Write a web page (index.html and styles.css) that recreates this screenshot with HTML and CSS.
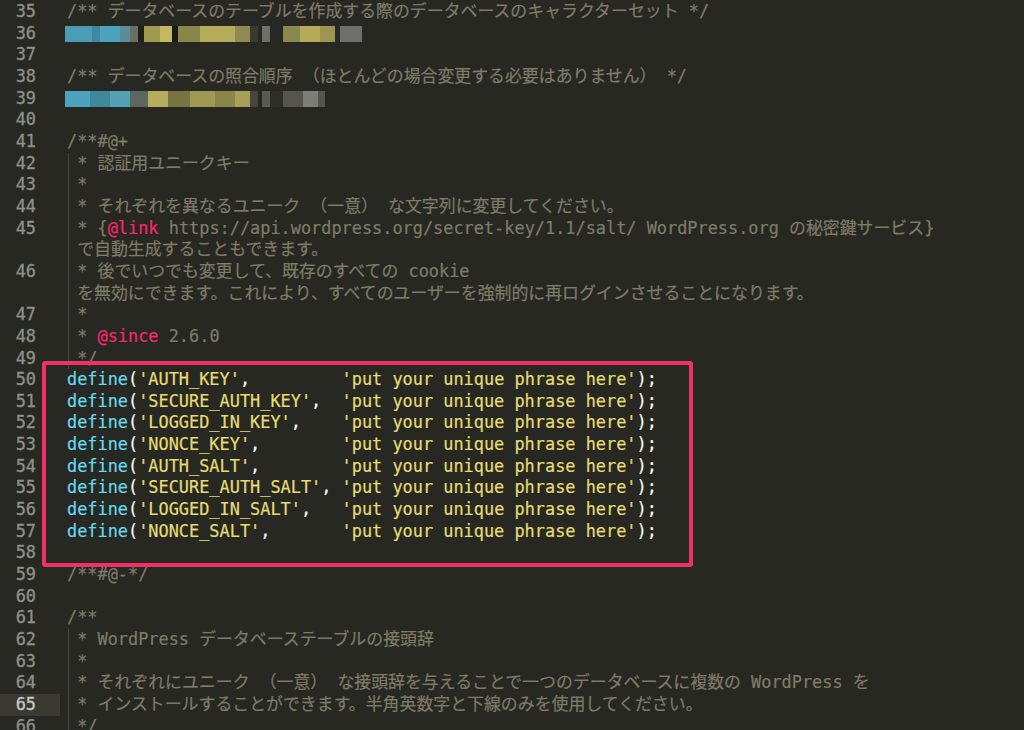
FILE: index.html
```html
<!DOCTYPE html>
<html lang="ja">
<head>
  <meta charset="UTF-8">
  <title>wp-config.php</title>
  <link rel="stylesheet" href="styles.css">
</head>
<body>
  <div class="editor">
    <div class="row"><span class="ln">35</span><span class="code"><span class="c">/** データベースのテーブルを作成する際のデータベースのキャラクターセット */</span></span></div>
    <div class="row"><span class="ln">36</span><span class="code"><span class="blur blur-a"></span></span></div>
    <div class="row"><span class="ln">37</span><span class="code"></span></div>
    <div class="row"><span class="ln">38</span><span class="code"><span class="c">/** データベースの照合順序 （ほとんどの場合変更する必要はありません） */</span></span></div>
    <div class="row"><span class="ln">39</span><span class="code"><span class="blur blur-b"></span></span></div>
    <div class="row"><span class="ln">40</span><span class="code"></span></div>
    <div class="row"><span class="ln">41</span><span class="code"><span class="c">/**#@+</span></span></div>
    <div class="row guide"><span class="ln">42</span><span class="code"><span class="c"> * 認証用ユニークキー</span></span></div>
    <div class="row guide"><span class="ln">43</span><span class="code"><span class="c"> *</span></span></div>
    <div class="row guide"><span class="ln">44</span><span class="code"><span class="c"> * それぞれを異なるユニーク （一意） な文字列に変更してください。</span></span></div>
    <div class="row guide"><span class="ln">45</span><span class="code"><span class="c"> * {<span class="tag">@link</span> https://api.wordpress.org/secret-key/1.1/salt/ WordPress.org の秘密鍵サービス}</span></span></div>
    <div class="row guide"><span class="ln"></span><span class="code"><span class="c"> で自動生成することもできます。</span></span></div>
    <div class="row guide"><span class="ln">46</span><span class="code"><span class="c"> * 後でいつでも変更して、既存のすべての cookie</span></span></div>
    <div class="row guide"><span class="ln"></span><span class="code"><span class="c"> を無効にできます。これにより、すべてのユーザーを強制的に再ログインさせることになります。</span></span></div>
    <div class="row guide"><span class="ln">47</span><span class="code"><span class="c"> *</span></span></div>
    <div class="row guide"><span class="ln">48</span><span class="code"><span class="c"> * <span class="tag">@since</span> 2.6.0</span></span></div>
    <div class="row guide"><span class="ln">49</span><span class="code"><span class="c"> */</span></span></div>
    <div class="row"><span class="ln">50</span><span class="code"><span class="fn">define</span><span class="p">(</span><span class="s">'AUTH_KEY'</span><span class="p">,</span>         <span class="s">'put your unique phrase here'</span><span class="p">);</span></span></div>
    <div class="row"><span class="ln">51</span><span class="code"><span class="fn">define</span><span class="p">(</span><span class="s">'SECURE_AUTH_KEY'</span><span class="p">,</span>  <span class="s">'put your unique phrase here'</span><span class="p">);</span></span></div>
    <div class="row"><span class="ln">52</span><span class="code"><span class="fn">define</span><span class="p">(</span><span class="s">'LOGGED_IN_KEY'</span><span class="p">,</span>    <span class="s">'put your unique phrase here'</span><span class="p">);</span></span></div>
    <div class="row"><span class="ln">53</span><span class="code"><span class="fn">define</span><span class="p">(</span><span class="s">'NONCE_KEY'</span><span class="p">,</span>        <span class="s">'put your unique phrase here'</span><span class="p">);</span></span></div>
    <div class="row"><span class="ln">54</span><span class="code"><span class="fn">define</span><span class="p">(</span><span class="s">'AUTH_SALT'</span><span class="p">,</span>        <span class="s">'put your unique phrase here'</span><span class="p">);</span></span></div>
    <div class="row"><span class="ln">55</span><span class="code"><span class="fn">define</span><span class="p">(</span><span class="s">'SECURE_AUTH_SALT'</span><span class="p">,</span> <span class="s">'put your unique phrase here'</span><span class="p">);</span></span></div>
    <div class="row"><span class="ln">56</span><span class="code"><span class="fn">define</span><span class="p">(</span><span class="s">'LOGGED_IN_SALT'</span><span class="p">,</span>   <span class="s">'put your unique phrase here'</span><span class="p">);</span></span></div>
    <div class="row"><span class="ln">57</span><span class="code"><span class="fn">define</span><span class="p">(</span><span class="s">'NONCE_SALT'</span><span class="p">,</span>       <span class="s">'put your unique phrase here'</span><span class="p">);</span></span></div>
    <div class="row"><span class="ln">58</span><span class="code"></span></div>
    <div class="row"><span class="ln">59</span><span class="code"><span class="c">/**#@-*/</span></span></div>
    <div class="row"><span class="ln">60</span><span class="code"></span></div>
    <div class="row"><span class="ln">61</span><span class="code"><span class="c">/**</span></span></div>
    <div class="row guide"><span class="ln">62</span><span class="code"><span class="c"> * WordPress データベーステーブルの接頭辞</span></span></div>
    <div class="row guide"><span class="ln">63</span><span class="code"><span class="c"> *</span></span></div>
    <div class="row guide"><span class="ln">64</span><span class="code"><span class="c"> * それぞれにユニーク （一意） な接頭辞を与えることで一つのデータベースに複数の WordPress を</span></span></div>
    <div class="row guide current"><span class="ln">65</span><span class="code"><span class="c"> * インストールすることができます。半角英数字と下線のみを使用してください。</span></span></div>
    <div class="row guide"><span class="ln">66</span><span class="code"><span class="c"> */</span></span></div>

    <!-- annotation drawn over the define() block -->
    <div class="frame"></div>
  </div>
</body>
</html>
```

FILE: styles.css
```css
html, body {
  margin: 0;
  padding: 0;
  background: #272822;
  overflow: hidden;
}
.editor {
  position: relative;
  height: 730px;
  padding-top: 1px;
  font-family: "DejaVu Sans Mono", "Noto Sans CJK JP", monospace;
  font-size: 16.9px;
  color: #f8f8f2;
}
.row {
  display: flex;
  height: 21.67px;
  line-height: 21.67px;
}
.ln {
  flex: none;
  width: 60px;
  padding-right: 24px;
  box-sizing: border-box;
  text-align: right;
  color: #8f908a;
  -webkit-text-stroke: 0.3px currentColor;
}
.code {
  flex: 1;
  margin-left: 7px;
  white-space: pre;
  -webkit-text-stroke: 0.2px currentColor;
}
/* indent guide on the leading space column */
.guide .code {
  background: linear-gradient(#45453e, #45453e) no-repeat 1px 0 / 1px 100%;
}
.current .ln {
  background: #3b3a32;
  color: #c9c9c3;
}
.c { color: #7f7b67; }
.tag { color: #f92672; }
.fn { color: #66d9ef; }
.s { color: #e6db74; }
.p { color: #f8f8f2; }

/* pixelated (hidden) settings */
.blur {
  display: inline-block;
  height: 16px;
  margin-left: -2px;
  vertical-align: middle;
}
.blur-a {
  width: 297px;
  background: linear-gradient(to right,
    #4a9db5 0 27px, #3d8aa0 27px 35px, #4ba3bd 35px 55px, #5a8c99 55px 65px,
    #6d6e68 65px 73px, #1f1f1a 73px 79px, #a09a50 79px 95px, #c4b960 95px 107px,
    #1a1a16 107px 113px, #8a8548 113px 135px, #b5ad5c 135px 170px, #8f8a52 170px 185px,
    #3a3a33 185px 193px, #272822 193px 197px, #6e6e6a 197px 205px, #272822 205px 218px,
    #8b8750 218px 235px, #b3ab5a 235px 255px, #9c9652 255px 270px, #2a2a25 270px 275px,
    #6f6f6c 275px 297px);
}
.blur-b {
  width: 260px;
  background: linear-gradient(to right,
    #4da2bc 0 25px, #40879c 25px 45px, #55a0b5 45px 65px, #5d665f 65px 83px,
    #b5ad5c 83px 103px, #77743f 103px 125px, #9e9852 125px 150px, #8a8548 150px 170px,
    #a8a056 170px 185px, #46463c 185px 193px, #272822 193px 197px, #5a5a55 197px 205px,
    #2e2e28 205px 218px, #55554d 218px 238px, #7e7e78 238px 253px, #55554f 253px 260px);
}

.frame {
  position: absolute;
  left: 42px;
  top: 361px;
  width: 651px;
  height: 206px;
  box-sizing: border-box;
  border: 4px solid #ee3169;
  border-radius: 3px;
}
```
